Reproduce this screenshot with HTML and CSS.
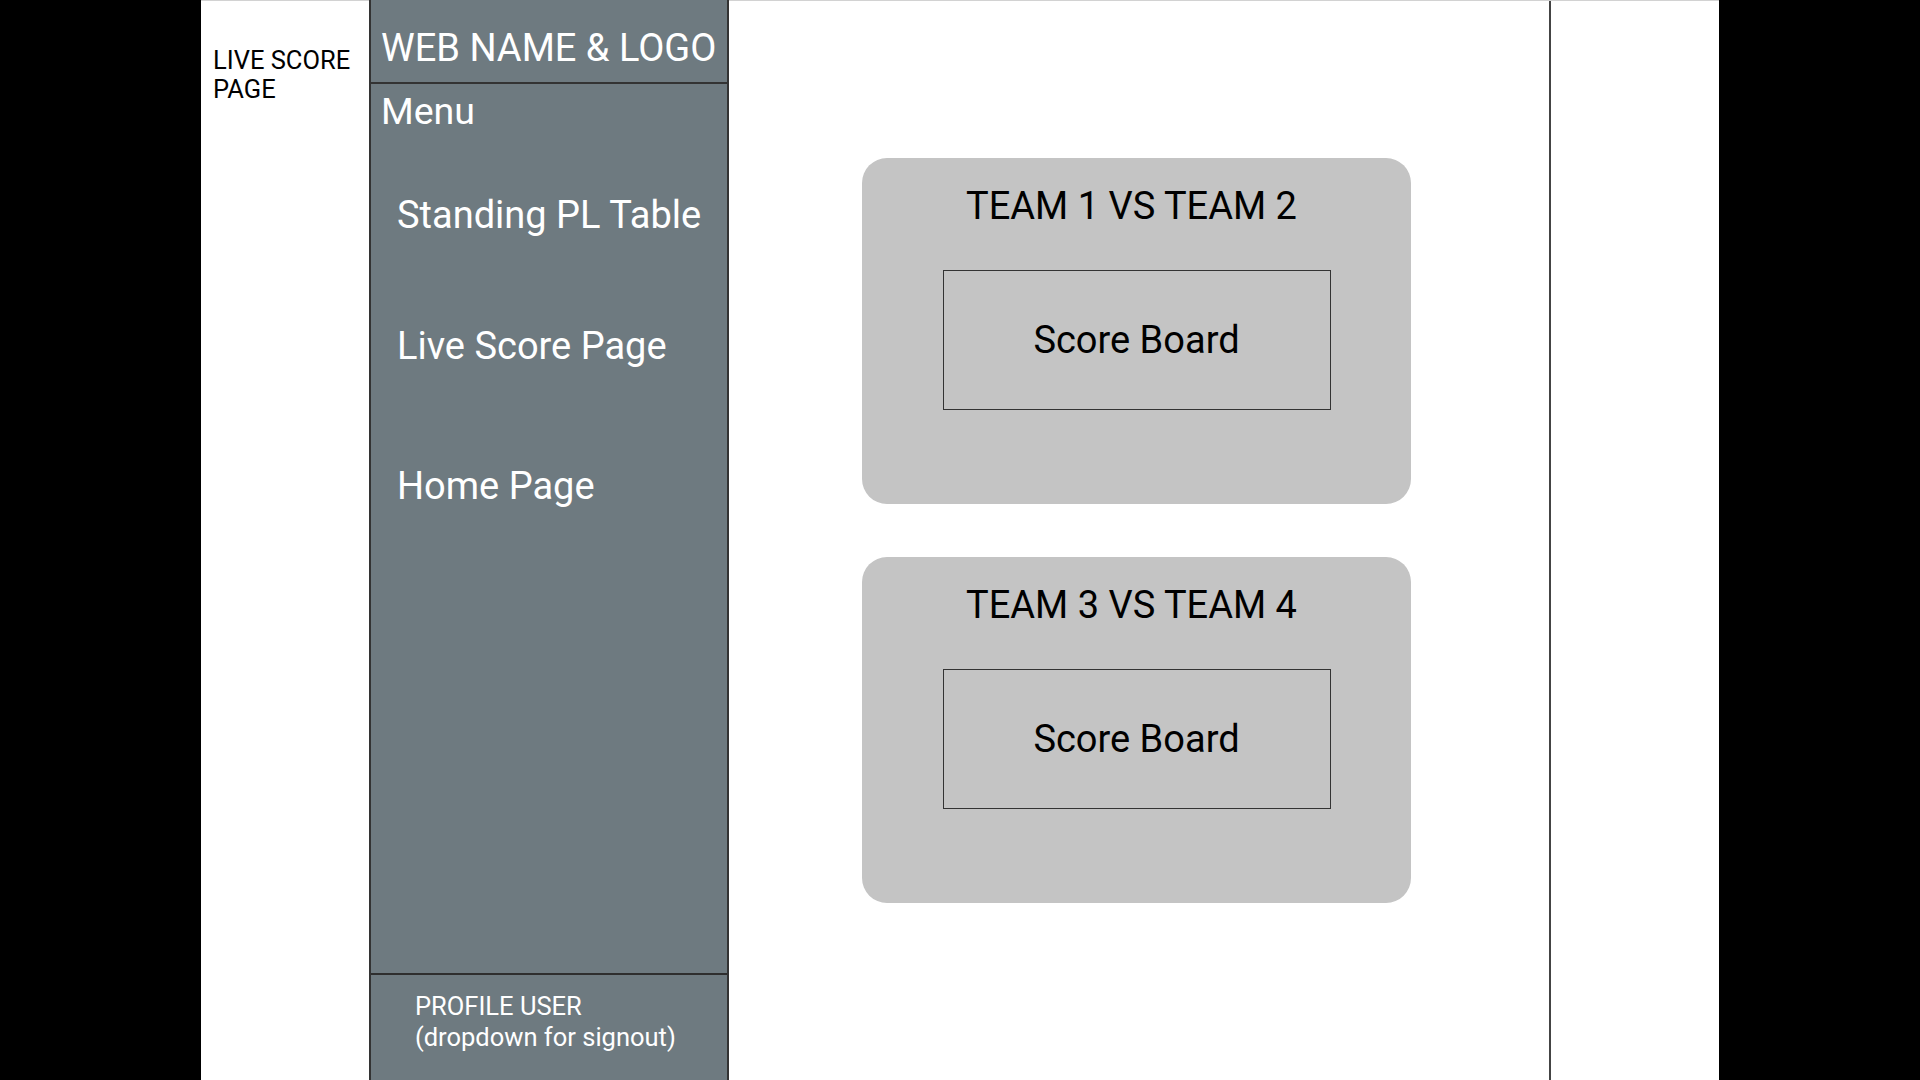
FILE: index.html
```html
<!DOCTYPE html>
<html lang="en">
<head>
    <meta charset="UTF-8">
    <meta name="viewport" content="width=device-width, initial-scale=1.0">
    <title>Live Score Page</title>
    <link rel="stylesheet" href="styles.css">
</head>
<body>
    <div class="page">
        <!-- page label -->
        <div class="page-label">LIVE SCORE PAGE</div>

        <div class="sidebar">
            <div class="brand">WEB NAME &amp; LOGO</div>
            <div class="menu-title">Menu</div>
            <nav class="nav">
                <a href="#">Standing PL Table</a>
                <a href="#">Live Score Page</a>
                <a href="#">Home Page</a>
            </nav>
            <div class="profile">
                PROFILE USER<br>
                (dropdown for signout)
            </div>
        </div>

        <div class="main">
            <div class="match">
                <h2 class="match-title">TEAM 1 VS TEAM 2</h2>
                <div class="score-board">Score Board</div>
            </div>
            <div class="match">
                <h2 class="match-title">TEAM 3 VS TEAM 4</h2>
                <div class="score-board">Score Board</div>
            </div>
        </div>

        <div class="right-space"></div>
    </div>
</body>
</html>
```

FILE: styles.css
```css
* {
    box-sizing: border-box;
}
html, body {
    margin: 0;
    height: 100%;
}
body {
    background: #000;
    font-family: Roboto, "Liberation Sans", sans-serif;
    display: flex;
    justify-content: center;
}
.page {
    width: 1518px;
    height: 1080px;
    background: #fff;
    border-top: 1px solid #d2d2d2;
    display: flex;
}

/* left label */
.page-label {
    width: 168px;
    padding: 45px 0 0 12px;
    font-size: 25.5px;
    line-height: 29px;
    color: #000;
}

/* sidebar */
.sidebar {
    width: 360px;
    margin-top: -1px;
    background: #6e7a80;
    border-left: 2px solid #333;
    border-right: 2px solid #333;
    display: flex;
    flex-direction: column;
    color: #fff;
}
.brand {
    height: 84px;
    padding: 26px 0 0 10px;
    font-size: 38px;
    line-height: 44px;
    border-bottom: 2px solid #333;
    white-space: nowrap;
}
.menu-title {
    padding: 5px 0 0 10px;
    font-size: 37.5px;
    line-height: 44px;
}
.nav {
    flex: 1;
    display: flex;
    flex-direction: column;
    gap: 87px;
    padding: 60px 0 0 26px;
}
.nav a {
    color: #fff;
    text-decoration: none;
    font-size: 38px;
    line-height: 44px;
}
.nav a:last-child {
    margin-top: 9px;
}
.profile {
    height: 107px;
    border-top: 2px solid #2e2e2e;
    padding: 16px 0 0 44px;
    font-size: 25.5px;
    line-height: 31px;
}

/* main content */
.main {
    width: 822px;
    border-right: 2px solid #444;
    display: flex;
    flex-direction: column;
    align-items: center;
    gap: 53px;
    padding-top: 157px;
    padding-right: 5px;
}
.match {
    width: 549px;
    height: 346px;
    background: #c4c4c4;
    border-radius: 25px;
    padding-top: 24px;
    display: flex;
    flex-direction: column;
    align-items: center;
}
.match-title {
    margin: 0 0 40px;
    font-size: 38px;
    font-weight: normal;
    line-height: 48px;
    color: #000;
    padding-right: 10px;
}
.score-board {
    width: 388px;
    height: 140px;
    border: 1.5px solid #333;
    display: flex;
    align-items: center;
    justify-content: center;
    font-size: 38px;
    color: #000;
}

.right-space {
    flex: 1;
}
```
